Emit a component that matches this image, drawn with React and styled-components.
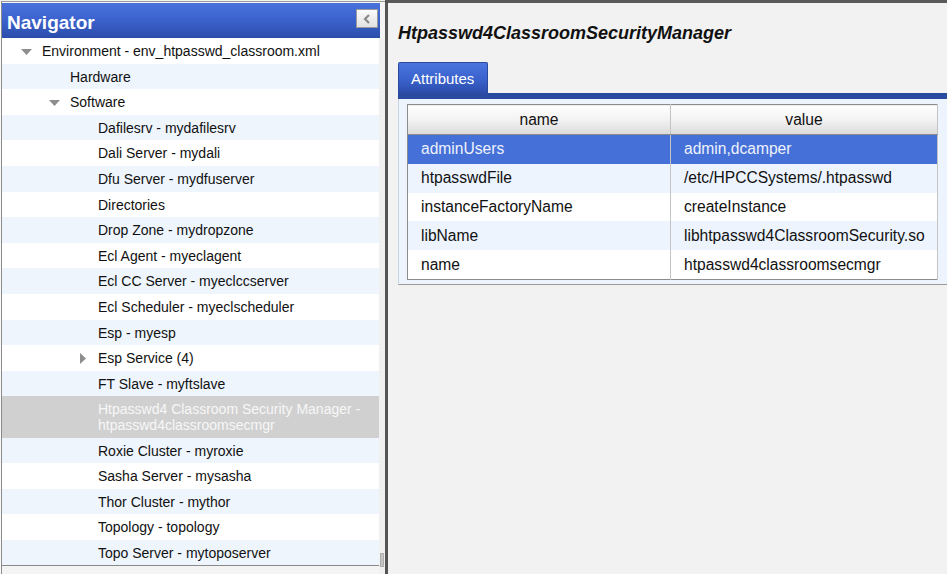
import React from "react";
import styled, { createGlobalStyle } from "styled-components";

const GlobalStyle = createGlobalStyle`
  html, body {
    margin: 0;
    padding: 0;
    background: #f2f2f2;
    font-family: "Liberation Sans", Arial, sans-serif;
    overflow: hidden;
  }
`;

const Page = styled.div`
  display: flex;
  width: 947px;
  height: 574px;
  background: #f2f2f2;
`;

/* левая панель навигатора */
const NavPane = styled.section`
  display: flex;
  flex-direction: column;
  width: 384px;
  margin-top: 1px;
  padding-left: 1px;
  background: #fafafa;
`;

const NavFrame = styled.div`
  display: flex;
  flex-direction: column;
  flex: 1;
  min-height: 0;
  border-top: 1px solid #9a9a9a;
  border-left: 1px solid #8a8a8a;
  padding-top: 1px;
  background: #f4f4f4;
`;

const NavHeader = styled.div`
  display: flex;
  align-items: center;
  justify-content: space-between;
  height: 35px;
  width: 378px;
  padding: 5px 2px 0 5px;
  box-sizing: border-box;
  background: linear-gradient(to bottom, #4a72dc 0%, #3b62cc 50%, #2b4caa 100%);
  color: #fff;
  font-size: 19px;
  font-weight: bold;
`;

const CollapseButton = styled.button`
  display: flex;
  align-items: center;
  justify-content: center;
  width: 22px;
  height: 19px;
  padding: 0;
  margin-top: -9px;
  border: 1px solid #9a9a9a;
  background: linear-gradient(to bottom, #fbfbfb, #e2e2e2);
`;

const TreeArea = styled.div`
  display: flex;
  flex: 1;
  min-height: 0;
`;

const TreeList = styled.ul`
  list-style: none;
  margin: 0;
  padding: 0;
  width: 378px;
  border-bottom: 1px solid #8a8a8a;
  align-self: flex-start;
`;

const TreeRow = styled.li`
  display: flex;
  align-items: flex-start;
  padding: 6px 8px 4px ${(p) => p.$level * 28 - 9}px;
  line-height: 15.6px;
  font-size: 14px;
  color: ${(p) => (p.$selected ? "#f7f7f7" : "#111")};
  background: ${(p) => (p.$selected ? "#d0d0d0" : p.$odd ? "#eef5fd" : "#ffffff")};
`;

const Twisty = styled.span`
  display: flex;
  align-items: center;
  flex: none;
  width: 21px;
  height: 15.6px;
  padding-left: ${(p) => (p.$closed ? 3 : 0)}px;
  box-sizing: border-box;
`;

const ScrollTrack = styled.div`
  position: relative;
  width: 6px;
  background: #f0f0f0;
`;

const ScrollThumb = styled.div`
  position: absolute;
  left: 1px;
  bottom: 7px;
  width: 4px;
  height: 14px;
  background: #c4c4c4;
  border: 1px solid #b0b0b0;
  box-sizing: border-box;
`;

const Splitter = styled.div`
  width: 3px;
  background: #555;
`;

/* правая панель со свойствами */
const DetailPane = styled.section`
  flex: 1;
  overflow: hidden;
  border-top: 3px solid #5a5a5a;
  padding: 0 0 0 10px;
  background: #f2f2f2;
`;

const Title = styled.h2`
  margin: 19px 0 0;
  font-size: 18px;
  line-height: 23px;
  font-weight: bold;
  font-style: italic;
  color: #111;
  white-space: nowrap;
`;

const TabBar = styled.div`
  display: flex;
  margin-top: 17px;
  width: 600px;
  border-bottom: 6px solid #2a4aa0;
`;

const Tab = styled.div`
  width: 90px;
  height: 31px;
  box-sizing: border-box;
  padding-left: 12px;
  line-height: 31px;
  font-size: 15px;
  color: #fff;
  border: 1px solid #2b4a9c;
  border-bottom: none;
  border-radius: 2px 2px 0 0;
  background: linear-gradient(to bottom, #4a74de 0%, #3a62cc 55%, #2c4cab 100%);
`;

const TabBody = styled.div`
  width: 600px;
  padding: 5px 8px 4px;
  box-sizing: border-box;
  background: #edf4fd;
  border-left: 1px solid #c8d4e4;
  border-bottom: 1px solid #9a9a9a;
`;

const Grid = styled.table`
  width: 531px;
  border-collapse: collapse;
  border: 1px solid #8c8c8c;
  font-size: 15.6px;
  table-layout: fixed;
`;

const NameCol = styled.col`
  width: 263px;
`;

const HeadCell = styled.th`
  height: 29px;
  padding: 0;
  font-weight: normal;
  color: #111;
  text-align: center;
  border-right: 1px solid #c4c4c4;
  border-bottom: 1px solid #8c8c8c;
  background: linear-gradient(to bottom, #ffffff 0%, #f2f2f2 50%, #dadada 100%);
`;

const Cell = styled.td`
  height: 28.8px;
  padding: 0 0 0 13px;
  white-space: nowrap;
  border-right: 1px solid #c4c4c4;
  color: ${(p) => (p.$selected ? "#eef2fb" : "#111")};
  background: ${(p) => (p.$selected ? "#4570d8" : p.$odd ? "#edf4fd" : "#ffffff")};
`;

const DownArrow = () => (
  <svg width="11" height="6" viewBox="0 0 11 6">
    <polygon points="0,0 11,0 5.5,6" fill="#8e8e8e" />
  </svg>
);

const RightArrow = () => (
  <svg width="6" height="11" viewBox="0 0 6 11">
    <polygon points="0,0 6,5.5 0,11" fill="#8e8e8e" />
  </svg>
);

const treeItems = [
  { level: 1, label: "Environment - env_htpasswd_classroom.xml", open: true },
  { level: 2, label: "Hardware" },
  { level: 2, label: "Software", open: true },
  { level: 3, label: "Dafilesrv - mydafilesrv" },
  { level: 3, label: "Dali Server - mydali" },
  { level: 3, label: "Dfu Server - mydfuserver" },
  { level: 3, label: "Directories" },
  { level: 3, label: "Drop Zone - mydropzone" },
  { level: 3, label: "Ecl Agent - myeclagent" },
  { level: 3, label: "Ecl CC Server - myeclccserver" },
  { level: 3, label: "Ecl Scheduler - myeclscheduler" },
  { level: 3, label: "Esp - myesp" },
  { level: 3, label: "Esp Service (4)", open: false },
  { level: 3, label: "FT Slave - myftslave" },
  {
    level: 3,
    label: "Htpasswd4 Classroom Security Manager - htpasswd4classroomsecmgr",
    selected: true,
  },
  { level: 3, label: "Roxie Cluster - myroxie" },
  { level: 3, label: "Sasha Server - mysasha" },
  { level: 3, label: "Thor Cluster - mythor" },
  { level: 3, label: "Topology - topology" },
  { level: 3, label: "Topo Server - mytoposerver" },
];

const attributes = [
  ["adminUsers", "admin,dcamper"],
  ["htpasswdFile", "/etc/HPCCSystems/.htpasswd"],
  ["instanceFactoryName", "createInstance"],
  ["libName", "libhtpasswd4ClassroomSecurity.so"],
  ["name", "htpasswd4classroomsecmgr"],
];

export default function App() {
  return (
    <Page>
      <GlobalStyle />
      <NavPane>
        <NavFrame>
          <NavHeader>
            <span>Navigator</span>
            <CollapseButton>
              <svg width="8" height="10" viewBox="0 0 8 10">
                <polyline points="6,1 2,5 6,9" fill="none" stroke="#8a8a8a" strokeWidth="2.2" />
              </svg>
            </CollapseButton>
          </NavHeader>
          <TreeArea>
            <TreeList>
              {treeItems.map((item, index) => (
                <TreeRow
                  key={item.label}
                  $level={item.level}
                  $odd={index % 2 === 1}
                  $selected={item.selected}
                >
                  <Twisty $closed={item.open === false}>
                    {item.open === true && <DownArrow />}
                    {item.open === false && <RightArrow />}
                  </Twisty>
                  <span>{item.label}</span>
                </TreeRow>
              ))}
            </TreeList>
            <ScrollTrack>
              <ScrollThumb />
            </ScrollTrack>
          </TreeArea>
        </NavFrame>
      </NavPane>
      <Splitter />
      <DetailPane>
        <Title>Htpasswd4ClassroomSecurityManager</Title>
        <TabBar>
          <Tab>Attributes</Tab>
        </TabBar>
        <TabBody>
          <Grid>
            <colgroup>
              <NameCol />
              <col />
            </colgroup>
            <thead>
              <tr>
                <HeadCell>name</HeadCell>
                <HeadCell>value</HeadCell>
              </tr>
            </thead>
            <tbody>
              {attributes.map(([name, value], index) => (
                <tr key={name}>
                  <Cell $selected={index === 0} $odd={index % 2 === 1}>
                    {name}
                  </Cell>
                  <Cell $selected={index === 0} $odd={index % 2 === 1}>
                    {value}
                  </Cell>
                </tr>
              ))}
            </tbody>
          </Grid>
        </TabBody>
      </DetailPane>
    </Page>
  );
}
